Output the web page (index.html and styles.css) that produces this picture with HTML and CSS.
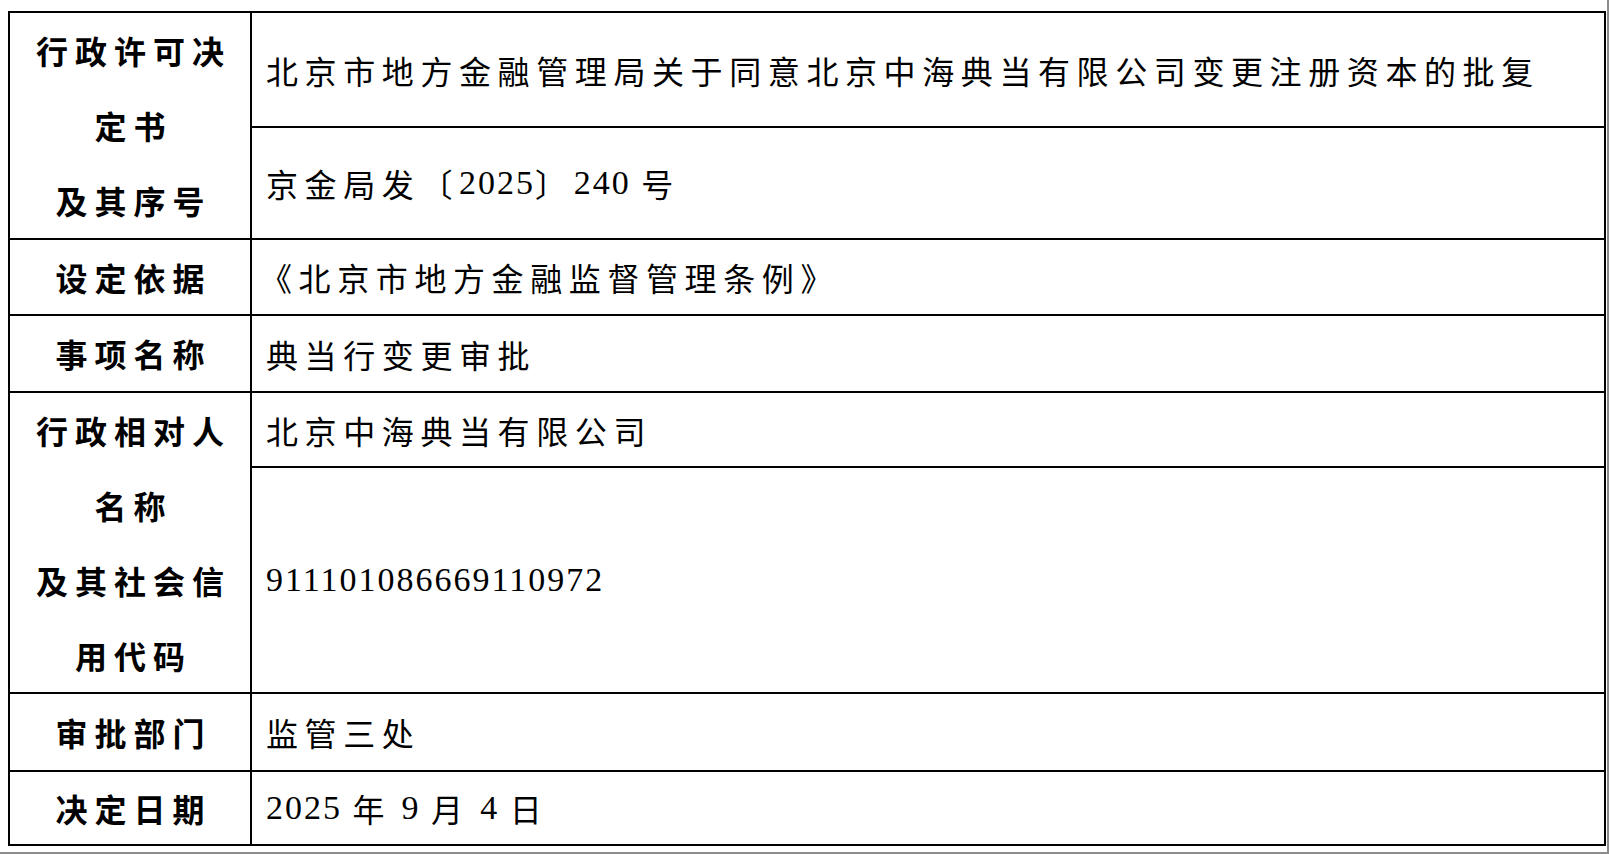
FILE: index.html
```html
<!DOCTYPE html>
<html lang="zh-CN">
<head>
<meta charset="utf-8">
<title>行政许可决定书</title>
<link rel="stylesheet" href="styles.css">
</head>
<body>
<div class="page">
  <div class="sheet">
    <div class="label span-2">行政许可决<br>定书<br>及其序号</div>
    <div class="value">北京市地方金融管理局关于同意北京中海典当有限公司变更注册资本的批复</div>
    <div class="value">京金局发〔<span class="num">2025</span>〕<span class="num">240 </span>号</div>

    <div class="label">设定依据</div>
    <div class="value quote">《北京市地方金融监督管理条例》</div>

    <div class="label">事项名称</div>
    <div class="value">典当行变更审批</div>

    <div class="label span-2">行政相对人<br>名称<br>及其社会信<br>用代码</div>
    <div class="value">北京中海典当有限公司</div>
    <div class="value"><span class="num">911101086669110972</span></div>

    <div class="label">审批部门</div>
    <div class="value">监管三处</div>

    <div class="label">决定日期</div>
    <div class="value"><span class="num">2025 </span>年<span class="num"> 9 </span>月<span class="num"> 4 </span>日</div>
  </div>
</div>
</body>
</html>
```

FILE: styles.css
```css
html, body {
  margin: 0;
  padding: 0;
  background: #ffffff;
  overflow: hidden;
}

.page {
  box-sizing: border-box;
  width: 1609px;
  height: 854px;
  padding: 11px 0 0 8px;
  border-right: 2px solid #8c8c8c;
  border-bottom: 2px solid #8c8c8c;
}

.sheet {
  box-sizing: border-box;
  width: 1598px;
  display: grid;
  grid-template-columns: 240px 1352px;
  grid-template-rows: 113px 110px 74px 75px 73px 224px 76px 72px;
  gap: 2px;
  padding: 2px;
  background: #000000;
}

.label,
.value {
  background: #ffffff;
  color: #000000;
  display: flex;
  align-items: center;
}

.label {
  justify-content: center;
  text-align: center;
  font-family: "Noto Sans CJK SC", "Noto Sans CJK JP", sans-serif;
  font-weight: 700;
  font-size: 32px;
  line-height: 75px;
  letter-spacing: 7px;
  padding-left: 7px;
}

.span-2 {
  grid-row: span 2;
}

.value {
  padding-left: 14px;
  font-family: "Liberation Serif", "Noto Sans CJK SC", serif;
  font-weight: 400;
  font-size: 32px;
  letter-spacing: 6.6px;
  white-space: pre;
}

.quote {
  padding-left: 8px;
}

.num {
  font-family: "Liberation Serif", serif;
  font-size: 34px;
  letter-spacing: 2px;
}
```
